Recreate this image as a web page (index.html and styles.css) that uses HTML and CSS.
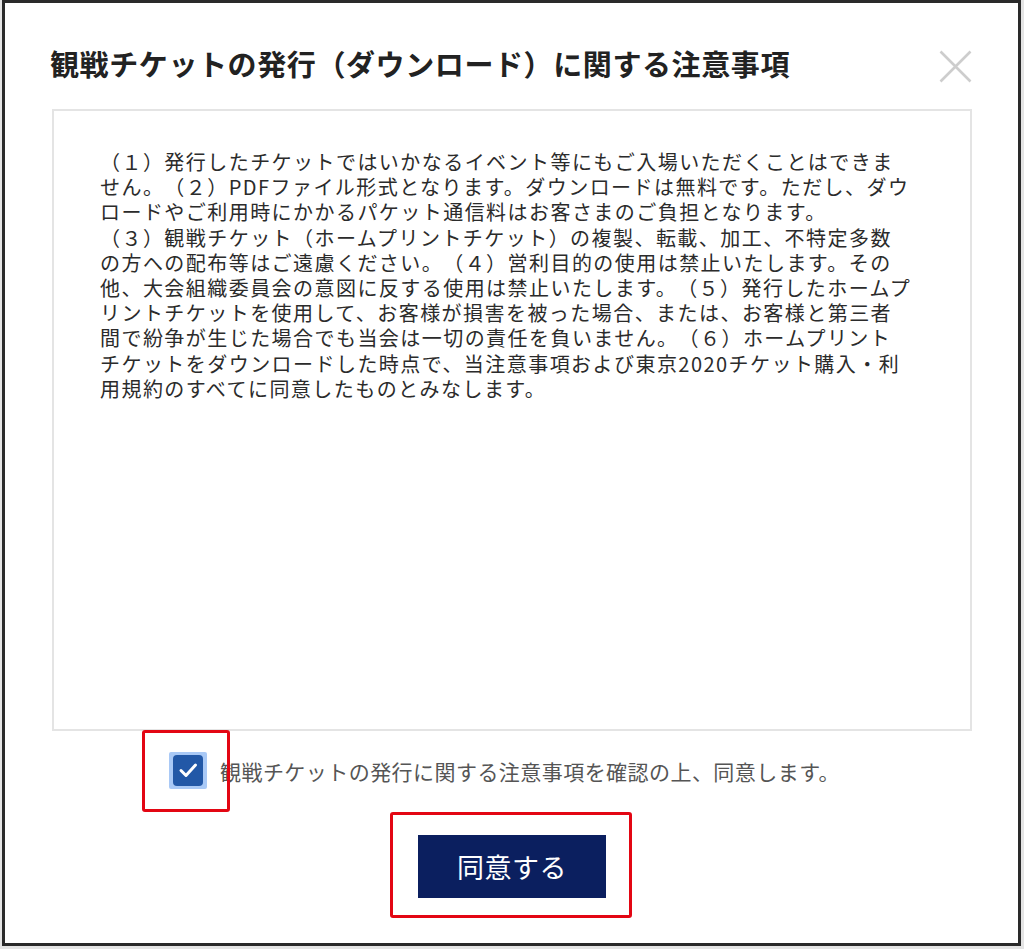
FILE: index.html
```html
<!DOCTYPE html>
<html lang="ja">
<head>
<meta charset="utf-8">
<title>観戦チケットの発行に関する注意事項</title>
<link rel="stylesheet" href="styles.css">
</head>
<body>
<div class="modal">
  <div class="modal-header">
    <h1 class="modal-title">観戦チケットの発行（ダウンロード）に関する注意事項</h1>
    <button class="close-btn" aria-label="閉じる">
      <svg width="33" height="33" viewBox="0 0 33 33"><path d="M1.5 1.5 L31.5 31.5 M31.5 1.5 L1.5 31.5" stroke="#cdcdcd" stroke-width="2.6" fill="none"/></svg>
    </button>
  </div>
  <div class="terms-box">
    <p class="terms-text">（１）発行したチケットではいかなるイベント等にもご入場いただくことはできま<br>せん。（２）PDFファイル形式となります。ダウンロードは無料です。ただし、ダウ<br>ロードやご利用時にかかるパケット通信料はお客さまのご負担となります。<br>（３）観戦チケット（ホームプリントチケット）の複製、転載、加工、不特定多数<br>の方への配布等はご遠慮ください。（４）営利目的の使用は禁止いたします。その<br>他、大会組織委員会の意図に反する使用は禁止いたします。（５）発行したホームプ<br>リントチケットを使用して、お客様が損害を被った場合、または、お客様と第三者<br>間で紛争が生じた場合でも当会は一切の責任を負いません。（６）ホームプリント<br>チケットをダウンロードした時点で、当注意事項および東京2020チケット購入・利<br>用規約のすべてに同意したものとみなします。</p>
  </div>
  <label class="agree-row">
    <span class="check-ring">
      <span class="check-box">
        <svg width="30" height="30" viewBox="0 0 30 30"><path d="M8 15.5 L13 20.5 L22.5 10" stroke="#fff" stroke-width="3" fill="none" stroke-linecap="round" stroke-linejoin="round"/></svg>
      </span>
    </span>
    <span class="agree-label">観戦チケットの発行に関する注意事項を確認の上、同意します。</span>
  </label>
  <div class="actions">
    <button class="agree-btn">同意する</button>
  </div>
  <span class="mark mark-check"></span>
  <span class="mark mark-button"></span>
</div>
</body>
</html>
```
FILE: styles.css
```css
html, body {
  margin: 0;
  padding: 0;
}
body {
  background: #e4e4e4;
  overflow: hidden;
  font-family: "Noto Sans CJK JP", "Noto Sans", sans-serif;
  color: #333;
  text-spacing-trim: space-all;
}
.modal {
  position: relative;
  box-sizing: border-box;
  width: 1019px;
  height: 946px;
  margin-left: 2px;
  background: #fff;
  border: 3px solid #2a2a2a;
  padding: 43px 46px 0 47px;
}
.modal-header {
  display: flex;
  justify-content: space-between;
  align-items: flex-start;
}
.modal-title {
  margin: 0 0 0 -2px;
  font-size: 29px;
  line-height: 35px;
  font-weight: 700;
  letter-spacing: 0.6px;
  color: #222;
}
.close-btn {
  margin-top: 4px;
  padding: 0;
  border: 0;
  background: none;
  width: 33px;
  height: 33px;
  display: block;
}
.close-btn svg {
  display: block;
}
.terms-box {
  margin-top: 26px;
  box-sizing: border-box;
  height: 622px;
  border: 2px solid #e4e4e4;
  padding: 38px 10px 0 46px;
}
.terms-text {
  margin: 0;
  font-size: 20px;
  line-height: 25.2px;
  letter-spacing: 1.45px;
  color: #2b2b2b;
  white-space: nowrap;
}
.agree-row {
  display: flex;
  align-items: center;
  margin-top: 21px;
  padding-left: 117px;
}
.check-ring {
  box-sizing: border-box;
  width: 38px;
  height: 37px;
  padding: 3px 4px;
  background: #a9c9f6;
  border-radius: 2px;
}
.check-box {
  display: block;
  width: 30px;
  height: 31px;
  background: #2258a7;
  border-radius: 4px;
}
.check-box svg {
  display: block;
}
.agree-label {
  margin-left: 13px;
  font-size: 21px;
  line-height: 30px;
  letter-spacing: 0.45px;
  color: #555;
}
.actions {
  display: flex;
  justify-content: center;
  margin-top: 46px;
}
.agree-btn {
  width: 188px;
  height: 63px;
  border: 0;
  background: #0b1f5f;
  color: #fff;
  font-family: "Noto Sans CJK JP", sans-serif;
  font-size: 27px;
  letter-spacing: 0.5px;
  padding: 0;
}
.mark {
  position: absolute;
  box-sizing: border-box;
  border: 3px solid #e30613;
  border-radius: 3px;
}
.mark-check {
  left: 137px;
  top: 727px;
  width: 88px;
  height: 82px;
}
.mark-button {
  left: 385px;
  top: 809px;
  width: 242px;
  height: 106px;
}
```
